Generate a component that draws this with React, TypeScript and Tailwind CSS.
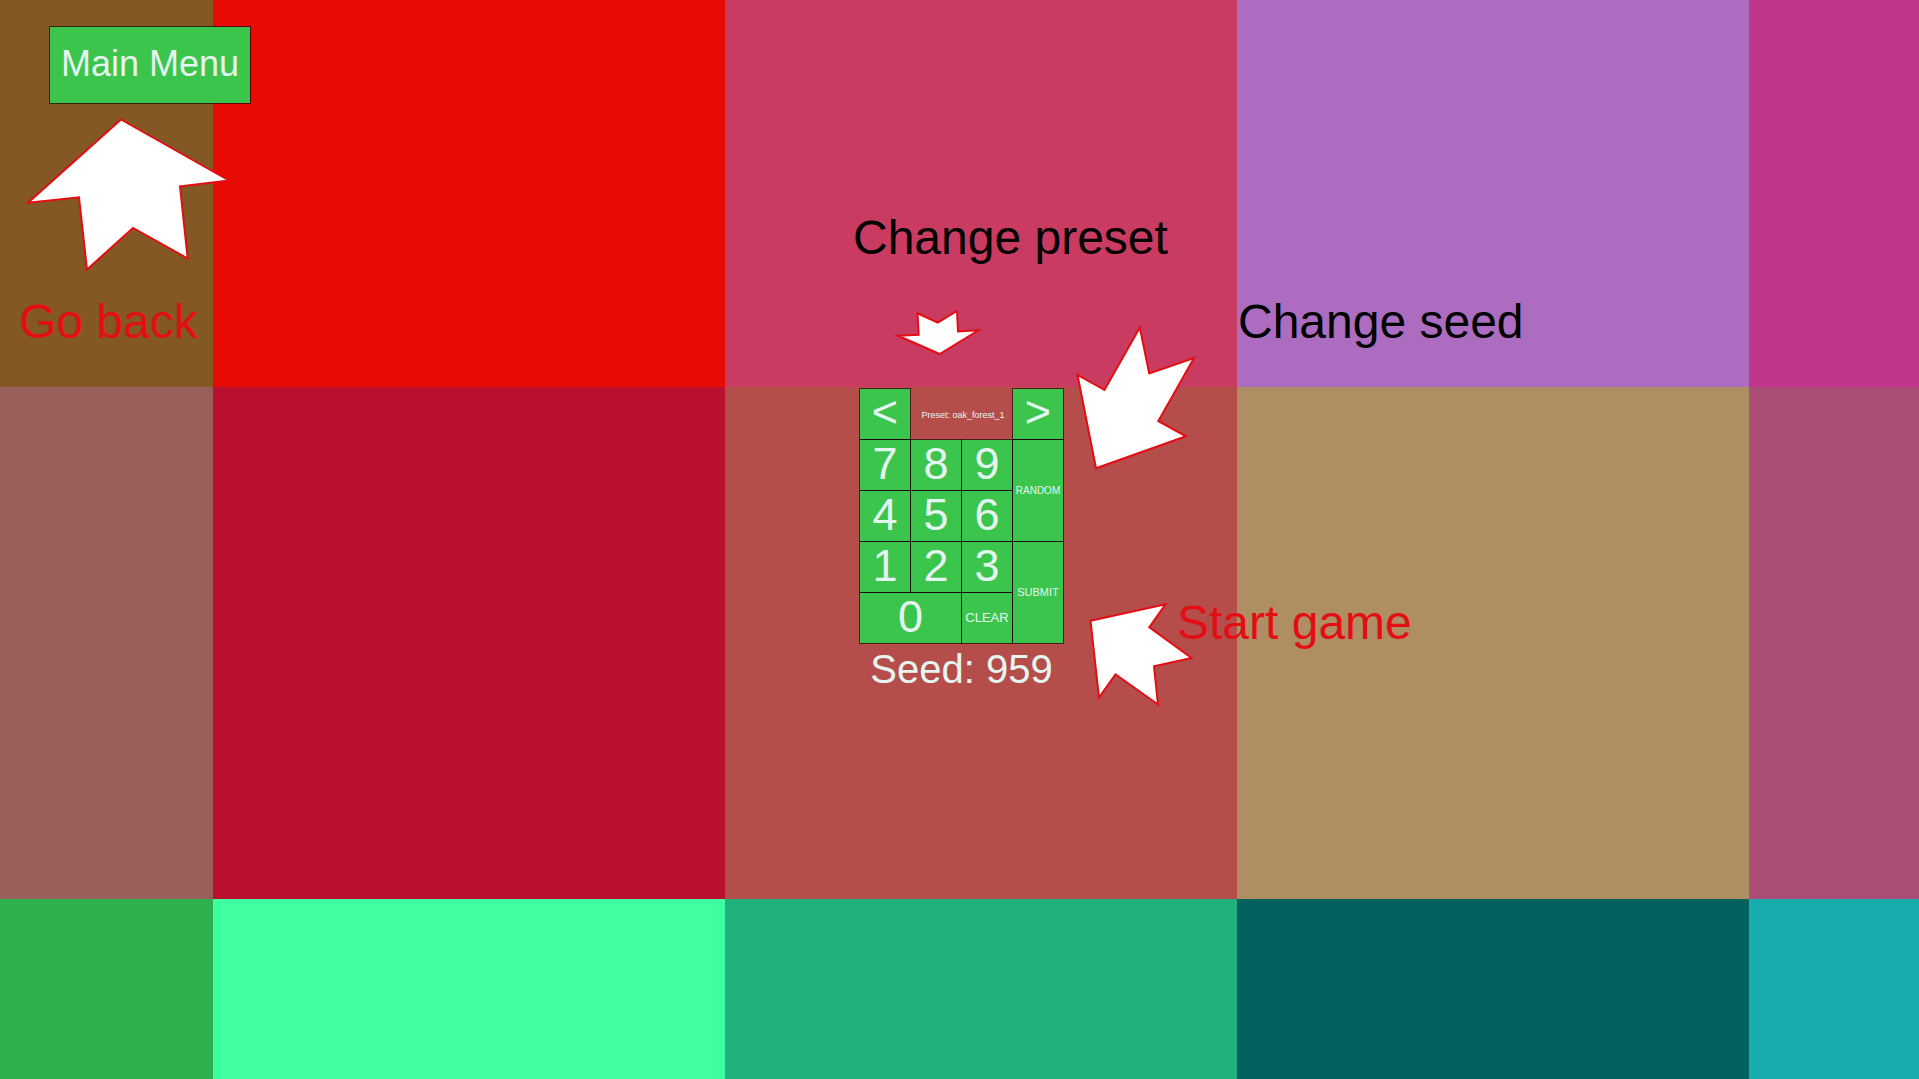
import { useState } from "react";

const tiles = [
  "bg-[#835824]",
  "bg-[#e80b03]",
  "bg-[#c93b60]",
  "bg-[#ac6dc0]",
  "bg-[#be378b]",
  "bg-[#996059]",
  "bg-[#b91032]",
  "bg-[#b54e4a]",
  "bg-[#b08e63]",
  "bg-[#aa4d77]",
  "bg-[#2db14e]",
  "bg-[#40ffa0]",
  "bg-[#22b07c]",
  "bg-[#04615e]",
  "bg-[#19acac]",
];

const presets = ["oak_forest_1", "oak_forest_2", "oak_forest_3"];

const keyBase =
  "flex items-center justify-center border border-black/60 bg-[#3cc54c] bg-clip-padding text-[#e5f5f2] leading-none cursor-pointer -mr-px -mb-px";

function Key({
  label,
  onClick,
  className = "pb-1 text-[45px]",
}: {
  label: string;
  onClick: () => void;
  className?: string;
}) {
  return (
    <button type="button" onClick={onClick} className={`${keyBase} ${className}`}>
      {label}
    </button>
  );
}

function Arrow({
  points,
  width,
  height,
  className,
}: {
  points: string;
  width: number;
  height: number;
  className: string;
}) {
  return (
    <svg
      aria-hidden="true"
      width={width}
      height={height}
      viewBox={`0 0 ${width} ${height}`}
      className={`pointer-events-none absolute max-w-none ${className}`}
    >
      <polygon points={points} fill="#fff" stroke="#e30d13" strokeWidth="2" strokeMiterlimit="10" />
    </svg>
  );
}

function Note({ text, className }: { text: string; className: string }) {
  return (
    <p className={`pointer-events-none absolute whitespace-nowrap text-5xl leading-none ${className}`}>
      {text}
    </p>
  );
}

export default function App() {
  const [seed, setSeed] = useState("959");
  const [preset, setPreset] = useState(0);

  const press = (digit: string) => setSeed((s) => (s + digit).slice(0, 9));
  const cycle = (step: number) => setPreset((p) => (p + step + presets.length) % presets.length);

  return (
    <div className="relative min-h-screen overflow-hidden font-['Liberation_Sans',Arial,sans-serif]">
      <div
        aria-hidden="true"
        className="absolute inset-0 grid grid-cols-[213px_512px_512px_512px_1fr] grid-rows-[387px_512px_1fr]"
      >
        {tiles.map((color) => (
          <div key={color} className={color} />
        ))}
      </div>

      <header className="relative h-[388px] pt-[26px] pl-[49px]">
        <button
          type="button"
          className="flex h-[78px] items-center justify-center border border-black/60 bg-[#3cc54c] bg-clip-padding px-[11px] pb-0.5 text-4xl leading-none text-[#e5f5f2] cursor-pointer"
        >
          Main Menu
        </button>
        <Arrow
          className="left-5 top-[110px]"
          width={220}
          height={170}
          points="101,9.5 209,70.5 160,76.3 167.7,148.5 113,118 67,159.5 59,87.3 8,92.7"
        />
        <Note text="Go back" className="left-[19px] top-[298px] text-[#e30d13]" />
      </header>

      <main className="relative pl-1">
        <div className="relative mx-auto w-[205px]">
          <div className="grid grid-cols-4 grid-rows-[repeat(5,51px)] pr-px pb-px">
            <Key label="<" className="pb-1.5 text-[45px]" onClick={() => cycle(-1)} />
            <div className="col-span-2 flex items-center justify-center whitespace-nowrap pt-1 pl-1 text-[9px] leading-none text-[#e5f5f2]">
              Preset: {presets[preset]}
            </div>
            <Key label=">" className="pb-1.5 text-[45px]" onClick={() => cycle(1)} />
            {["7", "8", "9"].map((d) => (
              <Key key={d} label={d} onClick={() => press(d)} />
            ))}
            <Key
              label="RANDOM"
              className="row-span-2 text-[10px]"
              onClick={() => setSeed(String(Math.floor(Math.random() * 1000)))}
            />
            {["4", "5", "6", "1", "2", "3"].map((d) => (
              <Key key={d} label={d} onClick={() => press(d)} />
            ))}
            <Key label="SUBMIT" className="row-span-2 text-[11px]" onClick={() => undefined} />
            <Key label="0" className="col-span-2 pb-1 text-[45px]" onClick={() => press("0")} />
            <Key label="CLEAR" className="pb-0.5 text-[13px]" onClick={() => setSeed("")} />
          </div>
          <p className="mt-[5px] whitespace-nowrap text-center text-[40px] leading-none text-[#e5f5f2]">
            Seed: {seed}
          </p>

          <Note text="Change preset" className="-left-[6px] -top-[174px] text-black" />
          <Note text="Change seed" className="left-[379px] -top-[90px] text-black" />
          <Note text="Start game" className="left-[318px] top-[211px] text-[#e30d13]" />
          <Arrow
            className="left-[31px] -top-[88px]"
            width={100}
            height={64}
            points="49.7,54 88.5,30.3 68,31.5 67,11 47.7,22.5 27.5,13.3 28.7,34.7 8,35.7"
          />
          <Arrow
            className="left-[211px] -top-[68px]"
            width={134}
            height={158}
            points="69.8,7.5 79.2,53.5 124,38 88.3,101 116,116.3 26,148.3 7.5,55 34.5,70"
          />
          <Arrow
            className="left-[221px] top-[202px]"
            width={122}
            height={124}
            points="10.5,30.7 85.5,14.3 69.3,37.3 111.5,68 74,76.3 78,114.5 35.5,84.3 19,107.5"
          />
        </div>
      </main>
    </div>
  );
}
